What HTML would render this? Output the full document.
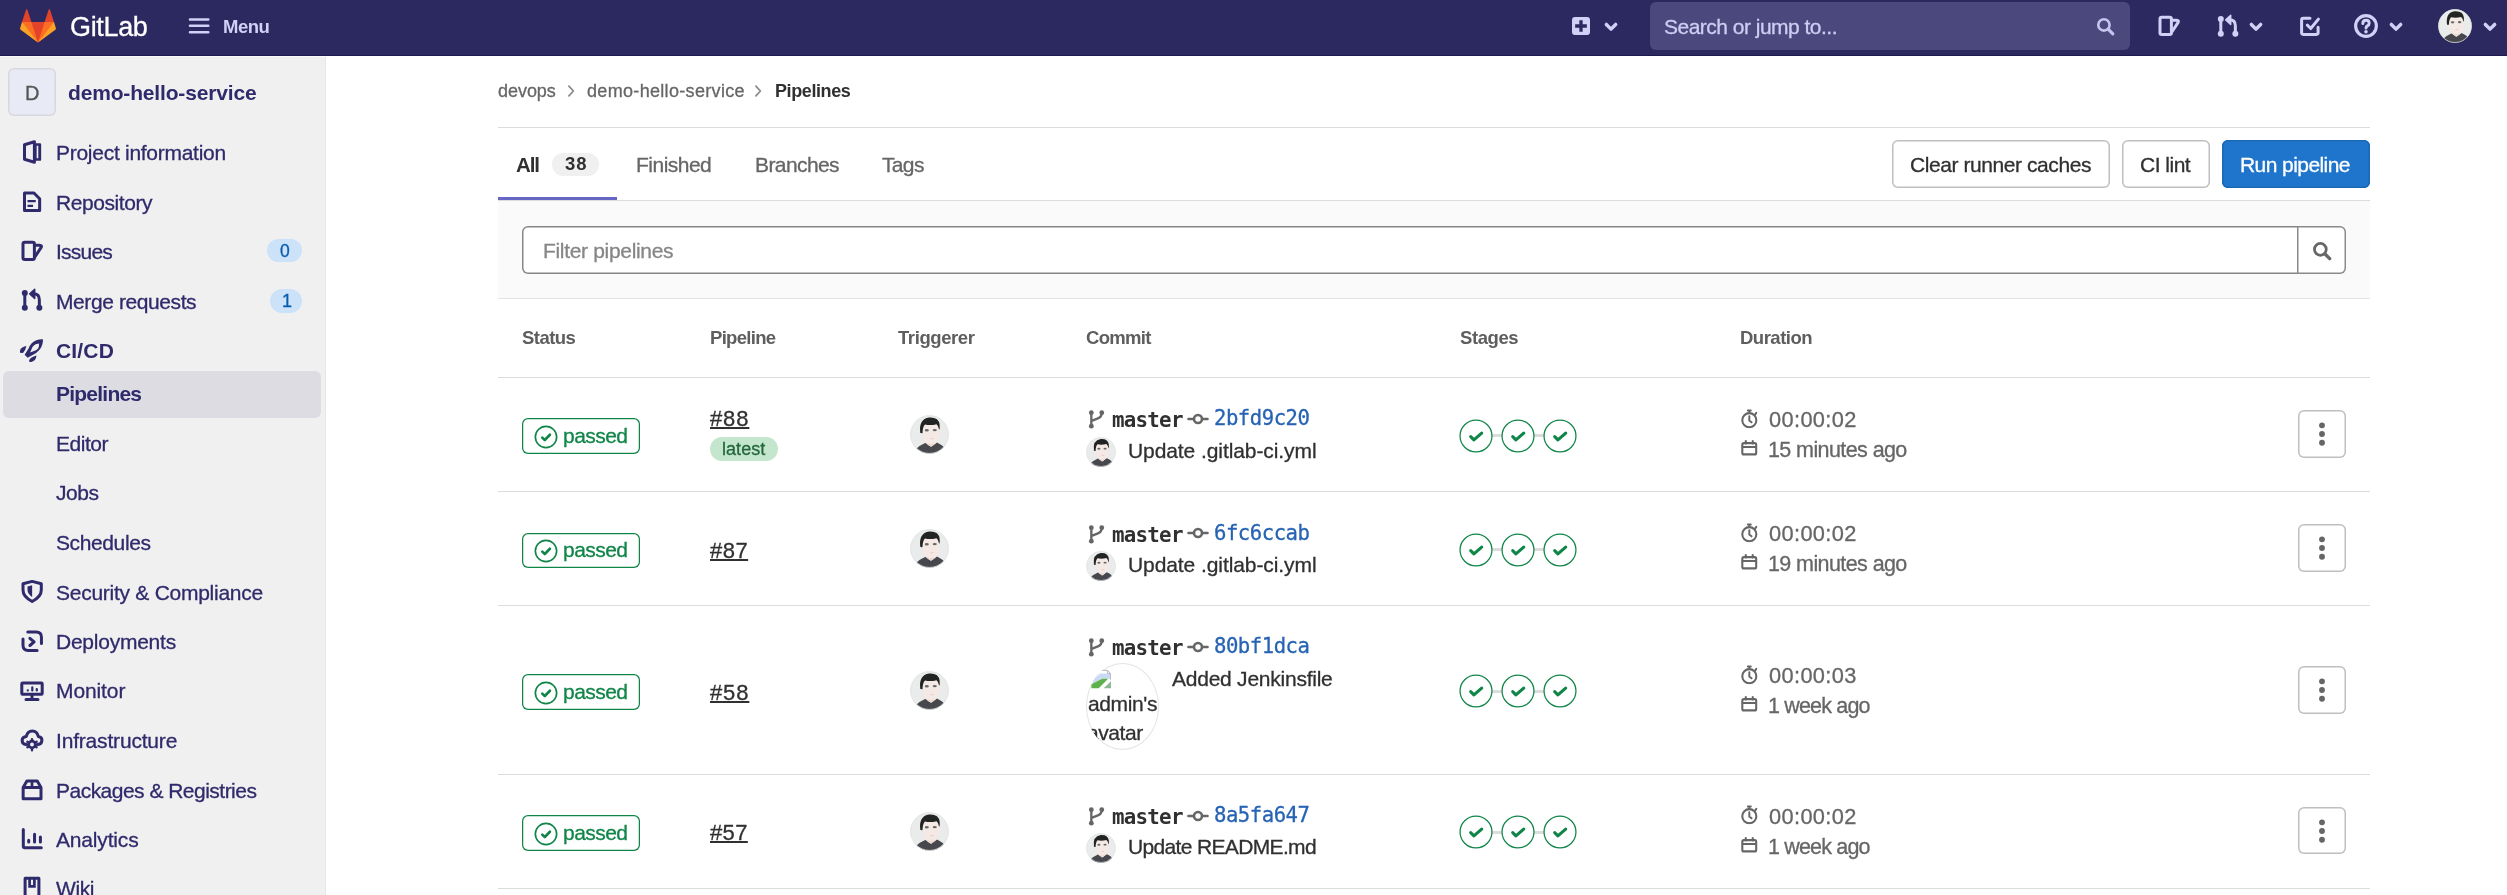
<!DOCTYPE html>
<html lang="en"><head><meta charset="utf-8"><title>Pipelines · devops / demo-hello-service · GitLab</title>
<style>
html,body{margin:0;padding:0}
body{width:2507px;height:895px;overflow:hidden;position:relative;background:#fff;font-family:"Liberation Sans",sans-serif;color:#303030}
.t{will-change:transform;position:absolute;white-space:nowrap;line-height:1;-webkit-text-stroke:0.3px}
.bd{-webkit-text-stroke:0}
.i{position:absolute;overflow:visible}
.b{position:absolute;box-sizing:border-box}
</style></head>
<body>
<svg width="0" height="0" style="position:absolute"><defs><symbol id="i-project" viewBox="0 0 16 16"><path fill="none" stroke="currentColor" stroke-width="2" stroke-linejoin="round" stroke-linecap="round" d="M3 3.2 L9.6 1.2 V14.8 L3 12.8 Z"/><path fill="currentColor" fill-rule="evenodd" d="M10 2.1 H13.3 Q14.1 2.1 14.1 2.9 V13.1 Q14.1 13.9 13.3 13.9 H10 Z M11.1 3.9 V12.1 H12.2 V3.9 Z"/></symbol><symbol id="i-doc" viewBox="0 0 16 16"><path fill="none" stroke="currentColor" stroke-width="2" stroke-linejoin="round" stroke-linecap="round" d="M3 2.7 H9.3 L13.1 6.5 V14.4 H3 Z"/><path fill="none" stroke="currentColor" stroke-width="1.5" d="M5 8 H10.5 M5 11.3 H8.7"/></symbol><symbol id="i-issues" viewBox="0 0 16 16"><rect fill="none" stroke="currentColor" stroke-width="2" stroke-linejoin="round" stroke-linecap="round" x="2" y="2.1" width="7.6" height="11.6" rx="1.2"/><path fill="none" stroke="currentColor" stroke-width="2" stroke-linejoin="round" stroke-linecap="round" d="M9.6 4.1 H13 Q14.9 4.2 14 5.8 L9.9 12"/></symbol><symbol id="i-mr" viewBox="0 0 16 16"><circle cx="3.2" cy="3.3" r="2" fill="currentColor"/><circle cx="3.2" cy="13.1" r="2" fill="currentColor"/><circle cx="12.9" cy="13.1" r="2" fill="currentColor"/><path fill="none" stroke="currentColor" stroke-width="2" stroke-linejoin="round" stroke-linecap="round" d="M3.2 3.3 V13 M12.9 13 V7.8 Q12.9 3.9 8.8 3.9"/><path fill="currentColor" d="M9.8 0.8 V7 L6.5 3.9 Z" stroke="currentColor" stroke-width="1" stroke-linejoin="round"/></symbol><symbol id="i-rocket" viewBox="0 0 16 16"><path fill="currentColor" fill-rule="evenodd" d="M15.3 0.8 Q11 0.5 7.8 3.5 Q6.3 5.1 5.8 6.9 L3.1 11.1 L5.1 13.2 L8.7 11.1 Q10.9 10.4 12.7 8.2 Q15.5 5 15.3 0.8 Z M6.7 9.6 L8.5 5.6 Q10.1 3.9 12.7 3.7 Q12.9 5.6 12.1 7 Q10.8 8.3 8.9 8.8 Z"/><path fill="currentColor" d="M4.3 5.25 Q1.4 5.6 0.3 7.6 Q-0.3 9 0 9.8 L2 9.95 Q3.6 8.4 4.3 5.25 Z"/><path fill="currentColor" d="M11 11.6 Q10.8 13.6 9.9 14.7 Q8.4 16.1 6.3 16.1 L6.1 14.9 Q6.6 13.6 7.5 13.2 Q9 12 11 11.6 Z"/></symbol><symbol id="i-shield" viewBox="0 0 16 16"><path fill="none" stroke="currentColor" stroke-width="2" stroke-linejoin="round" stroke-linecap="round" d="M8.1 1.6 L14.2 3.2 V7.4 C14.2 10.8 11.7 13.2 8.1 15 C4.5 13.2 2 10.8 2 7.4 V3.2 Z"/><path fill="currentColor" d="M8.1 4.2 V12 C6.2 10.8 5 9.2 5 7.2 V5 Z"/></symbol><symbol id="i-deploy" viewBox="0 0 16 16"><path fill="none" stroke="currentColor" stroke-width="2" stroke-linejoin="round" stroke-linecap="round" d="M5.2 2 H10.8 Q14.3 2 14.3 5.5 V9.6 M2 6.6 V10.8 Q2 14.3 5.5 14.3 H11.4"/><path fill="none" stroke="currentColor" stroke-width="2" stroke-linejoin="round" stroke-linecap="round" d="M6.6 6.2 L9.4 8.6 L6.6 11"/></symbol><symbol id="i-monitor" viewBox="0 0 16 16"><rect fill="none" stroke="currentColor" stroke-width="2" stroke-linejoin="round" stroke-linecap="round" x="1.2" y="3.4" width="13.6" height="7.4" rx="0.5"/><path fill="none" stroke="currentColor" stroke-width="2" stroke-linejoin="round" stroke-linecap="round" d="M4 14.4 H12 M8 11 V14.2"/><path fill="none" stroke="currentColor" stroke-width="1.5" stroke-linecap="round" d="M5.2 8.2 V8.3 M8.2 6.3 V8.3 M11.2 7.4 V8.3"/></symbol><symbol id="i-cloud" viewBox="0 0 16 16"><path fill="none" stroke="currentColor" stroke-width="2" stroke-linejoin="round" stroke-linecap="round" d="M4.4 11 H4 Q1.4 10.8 1.4 8.2 Q1.6 5.8 4.2 5.6 Q5 2 8.2 2 Q11.4 2 12.2 5.6 Q14.8 6 14.6 8.4 Q14.4 10.8 12 11 H11.6"/><circle cx="8" cy="11" r="2.2" fill="none" stroke="currentColor" stroke-width="1.8"/><path fill="none" stroke="currentColor" stroke-width="1.6" stroke-linecap="round" d="M8 7.4 V8.2 M8 13.8 V14.8 M4.9 9.2 L5.6 9.6 M11.1 9.2 L10.4 9.6 M4.9 12.8 L5.6 12.4 M11.1 12.8 L10.4 12.4"/></symbol><symbol id="i-package" viewBox="0 0 16 16"><path fill="none" stroke="currentColor" stroke-width="2" stroke-linejoin="round" stroke-linecap="round" d="M2.1 7 L4.6 2.7 H11.5 L14 7 V14.5 H2.1 Z M2.3 7 H13.8"/><path fill="none" stroke="currentColor" stroke-width="1.8" d="M8 2.7 V7"/></symbol><symbol id="i-chart" viewBox="0 0 16 16"><path fill="none" stroke="currentColor" stroke-width="2" stroke-linejoin="round" stroke-linecap="round" d="M2.2 1.6 V12.8 Q2.2 13.8 3.2 13.8 H14.2"/><path fill="none" stroke="currentColor" stroke-width="2" stroke-linecap="round" d="M5.8 8.9 V10 M9.7 4.9 V10 M13.6 6.7 V10"/></symbol><symbol id="i-book" viewBox="0 0 16 16"><path fill="none" stroke="currentColor" stroke-width="2" stroke-linejoin="round" stroke-linecap="round" d="M3.4 15.5 V1.5 H12.6 V15.5"/><path fill="none" stroke="currentColor" stroke-width="1.8" d="M6.4 1.5 V6.9 H9.6 V1.5"/></symbol><symbol id="i-plus" viewBox="0 0 16 16"><path fill="currentColor" fill-rule="evenodd" d="M4 2 H12 Q14 2 14 4 V12 Q14 14 12 14 H4 Q2 14 2 12 V4 Q2 2 4 2 Z M6.9 4.1 V6.9 H4.1 V9.1 H6.9 V11.9 H9.1 V9.1 H11.9 V6.9 H9.1 V4.1 Z"/></symbol><symbol id="i-chev" viewBox="0 0 16 16"><path fill="none" stroke="currentColor" stroke-width="2.3" stroke-linecap="round" stroke-linejoin="round" d="M4.9 6.3 L8 9.4 L11.1 6.3"/></symbol><symbol id="i-chevr" viewBox="0 0 16 16"><path fill="none" stroke="currentColor" stroke-width="1.15" stroke-linecap="round" stroke-linejoin="round" d="M6.6 4.7 L9.6 8 L6.6 11.3"/></symbol><symbol id="i-search" viewBox="0 0 16 16"><circle cx="6.8" cy="6.8" r="4.3" fill="none" stroke="currentColor" stroke-width="2"/><path stroke="currentColor" stroke-width="2.4" stroke-linecap="round" d="M10.2 10.2 L13.6 13.6"/></symbol><symbol id="i-todo" viewBox="0 0 16 16"><path fill="none" stroke="currentColor" stroke-width="2" stroke-linejoin="round" stroke-linecap="round" d="M13.4 8.8 V12.4 Q13.4 13.6 12.2 13.6 H3.6 Q2.4 13.6 2.4 12.4 V4 Q2.4 2.8 3.6 2.8 H8"/><path fill="none" stroke="currentColor" stroke-width="2" stroke-linejoin="round" stroke-linecap="round" stroke-width="2.2" d="M6.2 7.4 L8.5 9.7 L13.6 3.4"/></symbol><symbol id="i-help" viewBox="0 0 16 16"><circle cx="8" cy="8" r="6.9" fill="none" stroke="currentColor" stroke-width="2.1"/><path fill="none" stroke="currentColor" stroke-width="2" stroke-linecap="round" d="M5.9 6.3 Q5.9 4.2 8 4.2 Q10.1 4.2 10.1 6.1 Q10.1 7.3 8.9 7.9 Q8 8.4 8 9.4"/><circle cx="8" cy="11.8" r="1.2" fill="currentColor"/></symbol><symbol id="i-menu" viewBox="0 0 16 16"><path fill="none" stroke="currentColor" stroke-width="1.7" stroke-linecap="round" d="M2 4.3 H14.2 M2 8.55 H14.2 M2 12.8 H14.2"/></symbol><symbol id="i-branch" viewBox="0 0 16 16"><circle cx="4.6" cy="2.7" r="1.75" fill="currentColor"/><circle cx="4.6" cy="12.5" r="1.75" fill="currentColor"/><circle cx="12.2" cy="2.7" r="1.75" fill="currentColor"/><path fill="none" stroke="currentColor" stroke-width="1.7" stroke-linecap="round" d="M4.6 2.7 V12.5 M12.2 2.7 Q12.2 5.8 9.4 6.8 L4.8 8.6"/></symbol><symbol id="i-commit" viewBox="0 0 16 16"><circle cx="8" cy="8" r="2.9" fill="none" stroke="currentColor" stroke-width="1.9"/><path stroke="currentColor" stroke-width="1.7" stroke-linecap="round" d="M1 8 H5 M11 8 H15"/></symbol><symbol id="i-timer" viewBox="0 0 16 16"><circle cx="8.05" cy="9.5" r="5.5" fill="none" stroke="currentColor" stroke-width="1.6"/><path fill="none" stroke="currentColor" stroke-width="1.55" stroke-linecap="round" d="M8.05 6.5 V9.7 L9.8 11.2 M6.9 1.9 H9.2 M8.05 2 V3.9 M12.4 5.4 L13.5 3.8"/></symbol><symbol id="i-cal" viewBox="0 0 16 16"><rect x="2" y="3.6" width="12" height="9.7" rx="1.3" fill="none" stroke="currentColor" stroke-width="1.8"/><path stroke="currentColor" stroke-width="1.8" stroke-linecap="round" d="M2.4 6.9 H13.6 M5 1.7 V3.8 M11 1.7 V3.8"/></symbol><symbol id="i-okc" viewBox="0 0 16 16"><circle cx="8" cy="8" r="7.1" fill="none" stroke="currentColor" stroke-width="1.1"/><path fill="none" stroke="currentColor" stroke-width="1.75" stroke-linejoin="round" stroke-linecap="round" d="M5.5 8.4 L7.2 10 L10.6 6.5"/></symbol><symbol id="i-dots" viewBox="0 0 16 16"><circle cx="8" cy="2.2" r="1.95" fill="currentColor"/><circle cx="8" cy="8" r="1.95" fill="currentColor"/><circle cx="8" cy="13.8" r="1.95" fill="currentColor"/></symbol><symbol id="i-av" viewBox="0 0 40 40"><clipPath id="avc"><circle cx="20" cy="20" r="19.6"/></clipPath><circle cx="20" cy="20" r="19.6" fill="#e9eceb"/><g clip-path="url(#avc)"><path fill="#46484e" d="M5 36 Q9 31.5 14 29.6 L16.5 28.4 L21.5 32.5 L27.5 28.2 L30 29.4 Q34 31 36 35 V42 H5 Z"/><path fill="#f4e9e4" d="M12.6 12 Q13 7 21 7 Q29.6 7 30.2 13 Q31 22 28 27 Q24.5 31.5 21.5 32.4 Q16.5 30.6 14.2 25.6 Q12 19 12.6 12 Z"/><path fill="#ead6cf" d="M16.4 28.2 Q21.5 31.6 27.4 28 L27.5 28.4 L21.5 32.5 L16.5 28.6 Z"/><path fill="#222323" d="M10.6 18.4 Q8.6 4.2 19.6 2.6 Q29.6 2 30.4 10 Q30.8 13 30 15.4 Q29.4 11 27.2 9.4 Q21 11 15.4 9.8 Q13 12 12.8 18.6 Z"/><ellipse cx="17.2" cy="15.7" rx="2.1" ry="1.25" fill="#636b67"/><ellipse cx="25.4" cy="15.5" rx="2.1" ry="1.25" fill="#636b67"/><path fill="#e8b3ad" d="M20.2 24 h4.4 q-2.2 1.5 -4.4 0z"/></g><circle cx="20" cy="20" r="19.4" fill="none" stroke="#dfe2e1" stroke-width="0.8"/></symbol></defs></svg>
<header>
<div class="b" style="left:0px;top:0px;width:2507px;height:55px;background:#2c2960"></div>
<svg class="i" style="left:20px;top:7.5px" width="36" height="36" viewBox="0 0 36 36"><path fill="#e24329" d="M2 14l9.38 9v-9l-4-12.28c-.205-.632-1.176-.632-1.38 0z"/><path fill="#e24329" d="M34 14l-9.38 9v-9l4-12.28c.205-.632 1.176-.632 1.38 0z"/><path fill="#e24329" d="M18,34.38 3,14 33,14 Z"/><path fill="#fc6d26" d="M18,34.38 11.38,14 2,14 6,25Z"/><path fill="#fc6d26" d="M18,34.38 24.62,14 34,14 30,25Z"/><path fill="#fca326" d="M2 14L.1 20.16c-.18.565 0 1.2.5 1.56l17.42 12.66z"/><path fill="#fca326" d="M34 14l1.9 6.16c.18.565 0 1.2-.5 1.56L18 34.38z"/></svg>
<span class="t" style="left:70.20px;top:14.00px;font-size:27px;color:#fff;letter-spacing:-0.340px;">GitLab</span>
<svg class="i" style="left:187.00px;top:13.40px;color:#d2d0f7;" width="24" height="24"><use href="#i-menu"/></svg>
<span class="t bd" style="left:222.60px;top:18.00px;font-size:18.5px;font-weight:700;color:#d2d0f7;letter-spacing:-0.517px;">Menu</span>
<svg class="i" style="left:1569.00px;top:14.00px;color:#d2d0f7;" width="24" height="24"><use href="#i-plus"/></svg>
<svg class="i" style="left:1599.00px;top:14.60px;color:#d2d0f7;" width="24" height="24"><use href="#i-chev"/></svg>
<div class="b" style="left:1650px;top:2px;width:480px;height:48px;background:#4b487d;border-radius:6px"></div>
<span class="t" style="left:1663.90px;top:16.00px;font-size:21px;color:#cfcdf3;letter-spacing:-0.513px;">Search or jump to...</span>
<svg class="i" style="left:2094.60px;top:15.60px;color:#c6c4ee;" width="21" height="21"><use href="#i-search"/></svg>
<svg class="i" style="left:2157.00px;top:14.00px;color:#d2d0f7;" width="24" height="24"><use href="#i-issues"/></svg>
<svg class="i" style="left:2215.50px;top:14.00px;color:#d2d0f7;" width="24" height="24"><use href="#i-mr"/></svg>
<svg class="i" style="left:2244.20px;top:14.60px;color:#d2d0f7;" width="24" height="24"><use href="#i-chev"/></svg>
<svg class="i" style="left:2298.30px;top:14.00px;color:#d2d0f7;" width="24" height="24"><use href="#i-todo"/></svg>
<svg class="i" style="left:2353.50px;top:14.00px;color:#d2d0f7;" width="24" height="24"><use href="#i-help"/></svg>
<svg class="i" style="left:2383.80px;top:14.60px;color:#d2d0f7;" width="24" height="24"><use href="#i-chev"/></svg>
<svg class="i" style="left:2438.00px;top:9.00px;" width="34" height="34"><use href="#i-av"/></svg>
<svg class="i" style="left:2478.00px;top:14.60px;color:#d2d0f7;" width="24" height="24"><use href="#i-chev"/></svg>
</header>
<aside><nav>
<div class="b" style="left:0px;top:56px;width:326px;height:839px;background:#f0f0f0;box-shadow:inset -1px 0 0 #e6e7e7"></div>
<div class="b" style="left:0px;top:55px;width:2507px;height:1px;background:#1c1a4c"></div>
<div class="b" style="left:0px;top:56px;width:326px;height:1px;background:#fbfbfe"></div>
<div class="b" style="left:8px;top:68px;width:48px;height:48px;background:#e8eaf6;border-radius:6px;box-shadow:inset 0 0 0 1.5px rgba(0,0,0,.08)"></div>
<span class="t" style="left:25.00px;top:83.00px;font-size:20px;color:#555;">D</span>
<span class="t bd" style="left:68.40px;top:82.00px;font-size:21px;font-weight:700;color:#2f2a6b;letter-spacing:-0.163px;">demo-hello-service</span>
<div class="b" style="left:3px;top:370.5px;width:317.5px;height:47px;background:#dcdce2;border-radius:6px"></div>
<svg class="i" style="left:20.00px;top:139.90px;color:#2f2a6b;" width="24" height="24"><use href="#i-project"/></svg>
<span class="t" style="left:56.10px;top:142.00px;font-size:21px;color:#2f2a6b;letter-spacing:-0.274px;">Project information</span>
<svg class="i" style="left:20.00px;top:189.40px;color:#2f2a6b;" width="24" height="24"><use href="#i-doc"/></svg>
<span class="t" style="left:56.10px;top:192.00px;font-size:21px;color:#2f2a6b;letter-spacing:-0.419px;">Repository</span>
<svg class="i" style="left:20.00px;top:238.90px;color:#2f2a6b;" width="24" height="24"><use href="#i-issues"/></svg>
<span class="t" style="left:56.10px;top:241.00px;font-size:21px;color:#2f2a6b;letter-spacing:-0.770px;">Issues</span>
<svg class="i" style="left:20.00px;top:288.40px;color:#2f2a6b;" width="24" height="24"><use href="#i-mr"/></svg>
<span class="t" style="left:56.10px;top:291.00px;font-size:21px;color:#2f2a6b;letter-spacing:-0.406px;">Merge requests</span>
<svg class="i" style="left:20.00px;top:337.80px;color:#2f2a6b;" width="24" height="24"><use href="#i-rocket"/></svg>
<span class="t bd" style="left:56.10px;top:340.00px;font-size:21px;font-weight:700;color:#2f2a6b;letter-spacing:0.169px;">CI/CD</span>
<span class="t bd" style="left:56.10px;top:383.00px;font-size:21px;font-weight:700;color:#2f2a6b;letter-spacing:-0.769px;">Pipelines</span>
<span class="t" style="left:56.10px;top:433.00px;font-size:21px;color:#2f2a6b;letter-spacing:-0.455px;">Editor</span>
<span class="t" style="left:56.10px;top:482.00px;font-size:21px;color:#2f2a6b;letter-spacing:-0.425px;">Jobs</span>
<span class="t" style="left:56.10px;top:532.00px;font-size:21px;color:#2f2a6b;letter-spacing:-0.391px;">Schedules</span>
<svg class="i" style="left:20.00px;top:579.30px;color:#2f2a6b;" width="24" height="24"><use href="#i-shield"/></svg>
<span class="t" style="left:56.10px;top:582.00px;font-size:21px;color:#2f2a6b;letter-spacing:-0.264px;">Security &amp; Compliance</span>
<svg class="i" style="left:20.00px;top:628.80px;color:#2f2a6b;" width="24" height="24"><use href="#i-deploy"/></svg>
<span class="t" style="left:56.10px;top:631.00px;font-size:21px;color:#2f2a6b;letter-spacing:-0.240px;">Deployments</span>
<svg class="i" style="left:20.00px;top:678.30px;color:#2f2a6b;" width="24" height="24"><use href="#i-monitor"/></svg>
<span class="t" style="left:56.10px;top:680.00px;font-size:21px;color:#2f2a6b;letter-spacing:-0.100px;">Monitor</span>
<svg class="i" style="left:20.00px;top:727.80px;color:#2f2a6b;" width="24" height="24"><use href="#i-cloud"/></svg>
<span class="t" style="left:56.10px;top:730.00px;font-size:21px;color:#2f2a6b;letter-spacing:-0.181px;">Infrastructure</span>
<svg class="i" style="left:20.00px;top:777.30px;color:#2f2a6b;" width="24" height="24"><use href="#i-package"/></svg>
<span class="t" style="left:56.10px;top:780.00px;font-size:21px;color:#2f2a6b;letter-spacing:-0.517px;">Packages &amp; Registries</span>
<svg class="i" style="left:20.00px;top:826.80px;color:#2f2a6b;" width="24" height="24"><use href="#i-chart"/></svg>
<span class="t" style="left:56.10px;top:829.00px;font-size:21px;color:#2f2a6b;letter-spacing:-0.175px;">Analytics</span>
<svg class="i" style="left:20.00px;top:876.30px;color:#2f2a6b;" width="24" height="24"><use href="#i-book"/></svg>
<span class="t" style="left:56.10px;top:878.00px;font-size:21px;color:#2f2a6b;letter-spacing:-0.375px;">Wiki</span>
<div class="b" style="left:267px;top:239px;width:34.7px;height:23.4px;background:#cbe2f9;border-radius:12px"></div>
<span class="t" style="left:279.50px;top:243.00px;font-size:17.5px;color:#0b5cad;">0</span>
<div class="b" style="left:270.4px;top:289px;width:31.3px;height:23.6px;background:#cbe2f9;border-radius:12px"></div>
<span class="t" style="left:282.00px;top:292.00px;font-size:18px;color:#0b5cad;">1</span>
</nav></aside>
<main>
<span class="t" style="left:498.00px;top:82.00px;font-size:18px;color:#666;letter-spacing:-0.040px;">devops</span>
<svg class="i" style="left:558.50px;top:78.50px;color:#8a8a8a;" width="24" height="24"><use href="#i-chevr"/></svg>
<span class="t" style="left:586.90px;top:82.00px;font-size:18px;color:#666;letter-spacing:0.322px;">demo-hello-service</span>
<svg class="i" style="left:746.00px;top:78.50px;color:#8a8a8a;" width="24" height="24"><use href="#i-chevr"/></svg>
<span class="t bd" style="left:775.20px;top:82.00px;font-size:18px;font-weight:700;letter-spacing:-0.400px;">Pipelines</span>
<div class="b" style="left:498px;top:127px;width:1871.5px;height:1px;background:#dcdcdc"></div>
<span class="t bd" style="left:515.90px;top:155.00px;font-size:20.5px;font-weight:700;letter-spacing:-1.175px;">All</span>
<div class="b" style="left:551.8px;top:152.5px;width:47.2px;height:23.4px;background:#f0f0f0;border-radius:12px"></div>
<span class="t bd" style="left:565.00px;top:155.00px;font-size:18.5px;font-weight:700;letter-spacing:0.875px;">38</span>
<span class="t" style="left:635.60px;top:154.00px;font-size:21px;color:#666;letter-spacing:-0.511px;">Finished</span>
<span class="t" style="left:755.20px;top:154.00px;font-size:21px;color:#666;letter-spacing:-0.593px;">Branches</span>
<span class="t" style="left:882.00px;top:154.00px;font-size:21px;color:#666;letter-spacing:-0.658px;">Tags</span>
<div class="b" style="left:498px;top:200px;width:1871.5px;height:1px;background:#dcdcdc"></div>
<div class="b" style="left:498px;top:197px;width:119px;height:3px;background:#6666c4"></div>
<div class="b" style="left:1892.4px;top:140.2px;width:217.6px;height:47.4px;background:#fff;border-radius:6px;box-shadow:inset 0 0 0 1.5px #bfbfbf"></div>
<span class="t" style="left:1909.70px;top:154.00px;font-size:21px;letter-spacing:-0.424px;">Clear runner caches</span>
<div class="b" style="left:2122.2px;top:140.2px;width:87.8px;height:47.4px;background:#fff;border-radius:6px;box-shadow:inset 0 0 0 1.5px #bfbfbf"></div>
<span class="t" style="left:2140.20px;top:154.00px;font-size:21px;letter-spacing:-0.504px;">CI lint</span>
<div class="b" style="left:2221.8px;top:140.2px;width:147.8px;height:47.4px;background:#1f75cb;border-radius:6px;box-shadow:inset 0 0 0 1.5px #1b68b5"></div>
<span class="t" style="left:2240.20px;top:154.00px;font-size:21px;color:#fff;letter-spacing:-0.568px;">Run pipeline</span>
<div class="b" style="left:498px;top:201px;width:1871.5px;height:97px;background:#fafafa"></div>
<div class="b" style="left:498px;top:298px;width:1871.5px;height:1px;background:#e4e4e4"></div>
<div class="b" style="left:522px;top:226px;width:1777px;height:47.5px;background:#fff;border-radius:6px 0 0 6px;box-shadow:inset 0 0 0 1.5px #868686"></div>
<span class="t" style="left:543.00px;top:240.00px;font-size:21px;color:#868686;letter-spacing:-0.325px;">Filter pipelines</span>
<div class="b" style="left:2297px;top:226px;width:48.6px;height:47.5px;background:#fff;border-radius:0 6px 6px 0;box-shadow:inset 0 0 0 1.5px #8a8a8a"></div>
<svg class="i" style="left:2311.00px;top:239.50px;color:#666;" width="22" height="22"><use href="#i-search"/></svg>
<span class="t bd" style="left:521.90px;top:329.00px;font-size:18.5px;font-weight:700;color:#5e5e5e;letter-spacing:-0.540px;">Status</span>
<span class="t bd" style="left:709.80px;top:329.00px;font-size:18.5px;font-weight:700;color:#5e5e5e;letter-spacing:-0.686px;">Pipeline</span>
<span class="t bd" style="left:897.60px;top:329.00px;font-size:18.5px;font-weight:700;color:#5e5e5e;letter-spacing:-0.406px;">Triggerer</span>
<span class="t bd" style="left:1085.50px;top:329.00px;font-size:18.5px;font-weight:700;color:#5e5e5e;letter-spacing:-0.675px;">Commit</span>
<span class="t bd" style="left:1459.50px;top:329.00px;font-size:18.5px;font-weight:700;color:#5e5e5e;letter-spacing:-0.425px;">Stages</span>
<span class="t bd" style="left:1739.50px;top:329.00px;font-size:18.5px;font-weight:700;color:#5e5e5e;letter-spacing:-0.500px;">Duration</span>
<div class="b" style="left:498px;top:377px;width:1871.5px;height:1px;background:#dcdcdc"></div>
<div class="b" style="left:522px;top:418.3px;width:117.6px;height:35.5px;background:#fff;border-radius:6px;box-shadow:inset 0 0 0 1.25px #108548"></div>
<svg class="i" style="left:533.50px;top:425.00px;color:#108548;" width="24" height="24"><use href="#i-okc"/></svg>
<span class="t" style="left:562.60px;top:425.00px;font-size:21px;color:#108548;letter-spacing:-0.550px;">passed</span>
<span class="t" style="left:709.80px;top:408.00px;font-size:22px;letter-spacing:0.875px;text-decoration:underline;text-underline-offset:1px;text-decoration-thickness:1.8px;">#88</span>
<div class="b" style="left:709.8px;top:437.0px;width:67.8px;height:24px;background:#c3e6cd;border-radius:12px"></div>
<span class="t" style="left:722.00px;top:440.00px;font-size:18px;color:#24663b;letter-spacing:0.040px;">latest</span>
<svg class="i" style="left:910.00px;top:414.90px;" width="39" height="39"><use href="#i-av"/></svg>
<svg class="i" style="left:1084.50px;top:409.30px;color:#666;" width="22" height="22"><use href="#i-branch"/></svg>
<span class="t bd" style="left:1111.60px;top:410.00px;font-size:20.8px;font-weight:700;font-family:'DejaVu Sans Mono','Liberation Mono',monospace;letter-spacing:-0.745px;">master</span>
<svg class="i" style="left:1187.00px;top:407.90px;color:#666;" width="22" height="22"><use href="#i-commit"/></svg>
<span class="t" style="left:1214.00px;top:408.00px;font-size:20.6px;color:#2663b4;font-family:'DejaVu Sans Mono','Liberation Mono',monospace;letter-spacing:-0.464px;">2bfd9c20</span>
<svg class="i" style="left:1086.00px;top:436.50px;" width="30" height="30"><use href="#i-av"/></svg>
<span class="t" style="left:1128.20px;top:440.00px;font-size:21px;letter-spacing:-0.083px;">Update .gitlab-ci.yml</span>
<div class="b" style="left:1489px;top:434.0px;width:60px;height:3px;background:#dcdcdc"></div>
<svg class="i" style="left:1458.00px;top:417.50px" width="36" height="36" viewBox="0 0 36 36"><circle cx="18" cy="18" r="15.95" fill="#fff" stroke="#108548" stroke-width="1.25"/><path fill="none" stroke="#108548" stroke-width="3.1" stroke-linejoin="round" stroke-linecap="round" d="M12.7 18.7 L15.9 21.9 L23.7 15.1"/></svg>
<svg class="i" style="left:1499.90px;top:417.50px" width="36" height="36" viewBox="0 0 36 36"><circle cx="18" cy="18" r="15.95" fill="#fff" stroke="#108548" stroke-width="1.25"/><path fill="none" stroke="#108548" stroke-width="3.1" stroke-linejoin="round" stroke-linecap="round" d="M12.7 18.7 L15.9 21.9 L23.7 15.1"/></svg>
<svg class="i" style="left:1541.90px;top:417.50px" width="36" height="36" viewBox="0 0 36 36"><circle cx="18" cy="18" r="15.95" fill="#fff" stroke="#108548" stroke-width="1.25"/><path fill="none" stroke="#108548" stroke-width="3.1" stroke-linejoin="round" stroke-linecap="round" d="M12.7 18.7 L15.9 21.9 L23.7 15.1"/></svg>
<svg class="i" style="left:1738.80px;top:407.70px;color:#666;" width="20.5" height="20.5"><use href="#i-timer"/></svg>
<span class="t" style="left:1768.60px;top:409.00px;font-size:21.8px;color:#666;letter-spacing:0.361px;">00:00:02</span>
<svg class="i" style="left:1739.80px;top:439.20px;color:#666;" width="18.5" height="18.5"><use href="#i-cal"/></svg>
<span class="t" style="left:1767.90px;top:440.00px;font-size:21.5px;color:#666;letter-spacing:-0.592px;">15 minutes ago</span>
<div class="b" style="left:2298.3px;top:410.2px;width:47.5px;height:47.5px;background:#fff;border-radius:6px;box-shadow:inset 0 0 0 1.5px #bfbfbf"></div>
<svg class="i" style="left:2310.00px;top:422.00px;color:#666;" width="24" height="24"><use href="#i-dots"/></svg>
<div class="b" style="left:498px;top:491px;width:1871.5px;height:1px;background:#dcdcdc"></div>
<div class="b" style="left:522px;top:532.5px;width:117.6px;height:35.5px;background:#fff;border-radius:6px;box-shadow:inset 0 0 0 1.25px #108548"></div>
<svg class="i" style="left:533.50px;top:539.20px;color:#108548;" width="24" height="24"><use href="#i-okc"/></svg>
<span class="t" style="left:562.60px;top:539.00px;font-size:21px;color:#108548;letter-spacing:-0.550px;">passed</span>
<span class="t" style="left:709.80px;top:540.00px;font-size:22px;letter-spacing:0.475px;text-decoration:underline;text-underline-offset:1px;text-decoration-thickness:1.8px;">#87</span>
<svg class="i" style="left:910.00px;top:529.10px;" width="39" height="39"><use href="#i-av"/></svg>
<svg class="i" style="left:1084.50px;top:523.50px;color:#666;" width="22" height="22"><use href="#i-branch"/></svg>
<span class="t bd" style="left:1111.60px;top:525.00px;font-size:20.8px;font-weight:700;font-family:'DejaVu Sans Mono','Liberation Mono',monospace;letter-spacing:-0.745px;">master</span>
<svg class="i" style="left:1187.00px;top:522.10px;color:#666;" width="22" height="22"><use href="#i-commit"/></svg>
<span class="t" style="left:1214.00px;top:523.00px;font-size:20.6px;color:#2663b4;font-family:'DejaVu Sans Mono','Liberation Mono',monospace;letter-spacing:-0.464px;">6fc6ccab</span>
<svg class="i" style="left:1086.00px;top:550.70px;" width="30" height="30"><use href="#i-av"/></svg>
<span class="t" style="left:1128.20px;top:554.00px;font-size:21px;letter-spacing:-0.083px;">Update .gitlab-ci.yml</span>
<div class="b" style="left:1489px;top:548.2px;width:60px;height:3px;background:#dcdcdc"></div>
<svg class="i" style="left:1458.00px;top:531.70px" width="36" height="36" viewBox="0 0 36 36"><circle cx="18" cy="18" r="15.95" fill="#fff" stroke="#108548" stroke-width="1.25"/><path fill="none" stroke="#108548" stroke-width="3.1" stroke-linejoin="round" stroke-linecap="round" d="M12.7 18.7 L15.9 21.9 L23.7 15.1"/></svg>
<svg class="i" style="left:1499.90px;top:531.70px" width="36" height="36" viewBox="0 0 36 36"><circle cx="18" cy="18" r="15.95" fill="#fff" stroke="#108548" stroke-width="1.25"/><path fill="none" stroke="#108548" stroke-width="3.1" stroke-linejoin="round" stroke-linecap="round" d="M12.7 18.7 L15.9 21.9 L23.7 15.1"/></svg>
<svg class="i" style="left:1541.90px;top:531.70px" width="36" height="36" viewBox="0 0 36 36"><circle cx="18" cy="18" r="15.95" fill="#fff" stroke="#108548" stroke-width="1.25"/><path fill="none" stroke="#108548" stroke-width="3.1" stroke-linejoin="round" stroke-linecap="round" d="M12.7 18.7 L15.9 21.9 L23.7 15.1"/></svg>
<svg class="i" style="left:1738.80px;top:521.90px;color:#666;" width="20.5" height="20.5"><use href="#i-timer"/></svg>
<span class="t" style="left:1768.60px;top:523.00px;font-size:21.8px;color:#666;letter-spacing:0.361px;">00:00:02</span>
<svg class="i" style="left:1739.80px;top:553.40px;color:#666;" width="18.5" height="18.5"><use href="#i-cal"/></svg>
<span class="t" style="left:1767.90px;top:554.00px;font-size:21.5px;color:#666;letter-spacing:-0.592px;">19 minutes ago</span>
<div class="b" style="left:2298.3px;top:524.4000000000001px;width:47.5px;height:47.5px;background:#fff;border-radius:6px;box-shadow:inset 0 0 0 1.5px #bfbfbf"></div>
<svg class="i" style="left:2310.00px;top:536.20px;color:#666;" width="24" height="24"><use href="#i-dots"/></svg>
<div class="b" style="left:498px;top:605px;width:1871.5px;height:1px;background:#dcdcdc"></div>
<div class="b" style="left:522px;top:674.1999999999999px;width:117.6px;height:35.5px;background:#fff;border-radius:6px;box-shadow:inset 0 0 0 1.25px #108548"></div>
<svg class="i" style="left:533.50px;top:680.90px;color:#108548;" width="24" height="24"><use href="#i-okc"/></svg>
<span class="t" style="left:562.60px;top:681.00px;font-size:21px;color:#108548;letter-spacing:-0.550px;">passed</span>
<span class="t" style="left:709.80px;top:682.00px;font-size:22px;letter-spacing:0.875px;text-decoration:underline;text-underline-offset:1px;text-decoration-thickness:1.8px;">#58</span>
<svg class="i" style="left:910.00px;top:670.80px;" width="39" height="39"><use href="#i-av"/></svg>
<svg class="i" style="left:1084.50px;top:637.10px;color:#666;" width="22" height="22"><use href="#i-branch"/></svg>
<span class="t bd" style="left:1111.60px;top:638.00px;font-size:20.8px;font-weight:700;font-family:'DejaVu Sans Mono','Liberation Mono',monospace;letter-spacing:-0.745px;">master</span>
<svg class="i" style="left:1187.00px;top:635.70px;color:#666;" width="22" height="22"><use href="#i-commit"/></svg>
<span class="t" style="left:1214.00px;top:636.00px;font-size:20.6px;color:#2663b4;font-family:'DejaVu Sans Mono','Liberation Mono',monospace;letter-spacing:-0.464px;">80bf1dca</span>
<div class="b" style="left:1086px;top:663px;width:73px;height:86.6px;border-radius:50%;box-shadow:inset 0 0 0 1px #e3e3e3;overflow:hidden"><svg class="i" style="left:4.5px;top:5.5px" width="20.4" height="19.6" viewBox="0 0 20 20"><path fill="#fff" d="M0 1 H16.5 L20 4.5 V20 H0Z"/><path fill="#c9daf2" d="M1.5 4.5 H19 V10 H11 L1.5 15Z"/><path fill="#e9eff8" d="M1.5 4.5 H10 L1.5 11Z"/><path fill="none" stroke="#b9b9b9" stroke-width="1" d="M9 1.5 H16.5 L19.5 4.5 V11 M16.5 1.5 V4.5 H19.5"/><path fill="#5db24c" d="M0 15.5 L11 10 H17 L7.5 19.6 H0Z"/><path fill="#8fb894" d="M12.5 19.6 L20 12.5 V19.6Z"/></svg><span class="t" style="left:1.50px;top:30.00px;font-size:21px;letter-spacing:-0.375px;">admin's</span><span class="t" style="left:1.20px;top:59.00px;font-size:21px;letter-spacing:-0.415px;">avatar</span></div>
<span class="t" style="left:1172.00px;top:668.00px;font-size:21px;letter-spacing:-0.239px;">Added Jenkinsfile</span>
<div class="b" style="left:1489px;top:689.9px;width:60px;height:3px;background:#dcdcdc"></div>
<svg class="i" style="left:1458.00px;top:673.40px" width="36" height="36" viewBox="0 0 36 36"><circle cx="18" cy="18" r="15.95" fill="#fff" stroke="#108548" stroke-width="1.25"/><path fill="none" stroke="#108548" stroke-width="3.1" stroke-linejoin="round" stroke-linecap="round" d="M12.7 18.7 L15.9 21.9 L23.7 15.1"/></svg>
<svg class="i" style="left:1499.90px;top:673.40px" width="36" height="36" viewBox="0 0 36 36"><circle cx="18" cy="18" r="15.95" fill="#fff" stroke="#108548" stroke-width="1.25"/><path fill="none" stroke="#108548" stroke-width="3.1" stroke-linejoin="round" stroke-linecap="round" d="M12.7 18.7 L15.9 21.9 L23.7 15.1"/></svg>
<svg class="i" style="left:1541.90px;top:673.40px" width="36" height="36" viewBox="0 0 36 36"><circle cx="18" cy="18" r="15.95" fill="#fff" stroke="#108548" stroke-width="1.25"/><path fill="none" stroke="#108548" stroke-width="3.1" stroke-linejoin="round" stroke-linecap="round" d="M12.7 18.7 L15.9 21.9 L23.7 15.1"/></svg>
<svg class="i" style="left:1738.80px;top:663.60px;color:#666;" width="20.5" height="20.5"><use href="#i-timer"/></svg>
<span class="t" style="left:1768.60px;top:665.00px;font-size:21.8px;color:#666;letter-spacing:0.361px;">00:00:03</span>
<svg class="i" style="left:1739.80px;top:695.10px;color:#666;" width="18.5" height="18.5"><use href="#i-cal"/></svg>
<span class="t" style="left:1767.90px;top:696.00px;font-size:21.5px;color:#666;letter-spacing:-0.833px;">1 week ago</span>
<div class="b" style="left:2298.3px;top:666.1px;width:47.5px;height:47.5px;background:#fff;border-radius:6px;box-shadow:inset 0 0 0 1.5px #bfbfbf"></div>
<svg class="i" style="left:2310.00px;top:677.90px;color:#666;" width="24" height="24"><use href="#i-dots"/></svg>
<div class="b" style="left:498px;top:774px;width:1871.5px;height:1px;background:#dcdcdc"></div>
<div class="b" style="left:522px;top:815.0px;width:117.6px;height:35.5px;background:#fff;border-radius:6px;box-shadow:inset 0 0 0 1.25px #108548"></div>
<svg class="i" style="left:533.50px;top:821.70px;color:#108548;" width="24" height="24"><use href="#i-okc"/></svg>
<span class="t" style="left:562.60px;top:822.00px;font-size:21px;color:#108548;letter-spacing:-0.550px;">passed</span>
<span class="t" style="left:709.80px;top:822.00px;font-size:22px;letter-spacing:0.375px;text-decoration:underline;text-underline-offset:1px;text-decoration-thickness:1.8px;">#57</span>
<svg class="i" style="left:910.00px;top:811.60px;" width="39" height="39"><use href="#i-av"/></svg>
<svg class="i" style="left:1084.50px;top:806.00px;color:#666;" width="22" height="22"><use href="#i-branch"/></svg>
<span class="t bd" style="left:1111.60px;top:807.00px;font-size:20.8px;font-weight:700;font-family:'DejaVu Sans Mono','Liberation Mono',monospace;letter-spacing:-0.745px;">master</span>
<svg class="i" style="left:1187.00px;top:804.60px;color:#666;" width="22" height="22"><use href="#i-commit"/></svg>
<span class="t" style="left:1214.00px;top:805.00px;font-size:20.6px;color:#2663b4;font-family:'DejaVu Sans Mono','Liberation Mono',monospace;letter-spacing:-0.464px;">8a5fa647</span>
<svg class="i" style="left:1086.00px;top:833.20px;" width="30" height="30"><use href="#i-av"/></svg>
<span class="t" style="left:1128.20px;top:836.00px;font-size:21px;letter-spacing:-0.652px;">Update README.md</span>
<div class="b" style="left:1489px;top:830.7px;width:60px;height:3px;background:#dcdcdc"></div>
<svg class="i" style="left:1458.00px;top:814.20px" width="36" height="36" viewBox="0 0 36 36"><circle cx="18" cy="18" r="15.95" fill="#fff" stroke="#108548" stroke-width="1.25"/><path fill="none" stroke="#108548" stroke-width="3.1" stroke-linejoin="round" stroke-linecap="round" d="M12.7 18.7 L15.9 21.9 L23.7 15.1"/></svg>
<svg class="i" style="left:1499.90px;top:814.20px" width="36" height="36" viewBox="0 0 36 36"><circle cx="18" cy="18" r="15.95" fill="#fff" stroke="#108548" stroke-width="1.25"/><path fill="none" stroke="#108548" stroke-width="3.1" stroke-linejoin="round" stroke-linecap="round" d="M12.7 18.7 L15.9 21.9 L23.7 15.1"/></svg>
<svg class="i" style="left:1541.90px;top:814.20px" width="36" height="36" viewBox="0 0 36 36"><circle cx="18" cy="18" r="15.95" fill="#fff" stroke="#108548" stroke-width="1.25"/><path fill="none" stroke="#108548" stroke-width="3.1" stroke-linejoin="round" stroke-linecap="round" d="M12.7 18.7 L15.9 21.9 L23.7 15.1"/></svg>
<svg class="i" style="left:1738.80px;top:804.40px;color:#666;" width="20.5" height="20.5"><use href="#i-timer"/></svg>
<span class="t" style="left:1768.60px;top:806.00px;font-size:21.8px;color:#666;letter-spacing:0.361px;">00:00:02</span>
<svg class="i" style="left:1739.80px;top:835.90px;color:#666;" width="18.5" height="18.5"><use href="#i-cal"/></svg>
<span class="t" style="left:1767.90px;top:837.00px;font-size:21.5px;color:#666;letter-spacing:-0.833px;">1 week ago</span>
<div class="b" style="left:2298.3px;top:806.9000000000001px;width:47.5px;height:47.5px;background:#fff;border-radius:6px;box-shadow:inset 0 0 0 1.5px #bfbfbf"></div>
<svg class="i" style="left:2310.00px;top:818.70px;color:#666;" width="24" height="24"><use href="#i-dots"/></svg>
<div class="b" style="left:498px;top:888px;width:1871.5px;height:1px;background:#dcdcdc"></div>
</main>
</body></html>
